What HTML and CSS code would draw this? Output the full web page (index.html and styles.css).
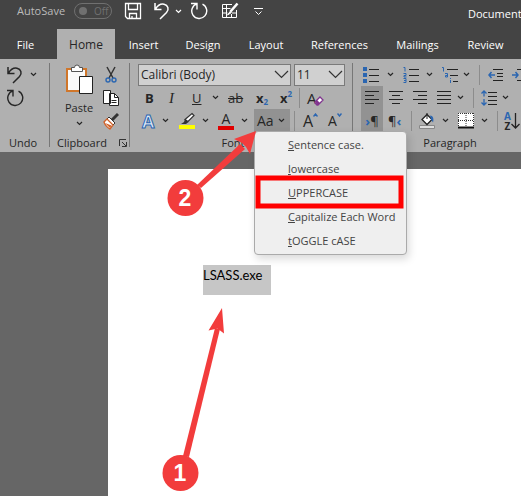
FILE: index.html
```html
<!DOCTYPE html>
<html lang="en">
<head>
    <meta charset="UTF-8">
    <meta name="viewport" content="width=device-width, initial-scale=1.0">
    <title>Document</title>
    <link rel="stylesheet" href="styles.css">
</head>
<body>
    <!-- Shared icon shapes -->
    <svg class="defs" width="0" height="0" aria-hidden="true">
        <symbol id="chev" viewBox="0 0 7 5"><path d="M1 1l2.500 2.500L6 1" fill="none" stroke="currentColor" stroke-width="1.200"/></symbol>
        <symbol id="undo" viewBox="0 0 18 18"><path d="M2 1v6.500h6.500M2.500 7C5 3 8 1.600 11 2.200c4 .8 5.500 5 2.500 8.300L7 17" fill="none" stroke="currentColor" stroke-width="1.500"/></symbol>
        <symbol id="redo" viewBox="0 0 18 18"><path d="M1 1.500h6v6M7 1.800A7.500 7.500 0 1 0 12.500 2.200" fill="none" stroke="currentColor" stroke-width="1.400"/></symbol>
    </svg>

    <header class="titlebar">
        <span class="autosave">AutoSave</span>
        <button class="toggle" aria-label="AutoSave off"><i></i>Off</button>
        <button class="qa" aria-label="Save">
            <svg width="18" height="18" viewBox="0 0 18 18" fill="none" stroke="#fff" stroke-width="1.300"><path d="M1.500 1.500h15v15h-13l-2-2zM4.500 1.500v6h9v-6M5.500 16.500v-5h7v5M8 14v2.500"/></svg>
        </button>
        <button class="qa" aria-label="Undo"><svg width="18" height="18"><use href="#undo"/></svg></button>
        <button class="qa" aria-label="Undo list"><svg width="7" height="5"><use href="#chev"/></svg></button>
        <button class="qa" aria-label="Redo"><svg width="18" height="18"><use href="#redo"/></svg></button>
        <button class="qa" aria-label="Draw table">
            <svg width="18" height="18" viewBox="0 0 18 18" fill="none" stroke="#fff"><path d="M11 2.500H1.500v13h14V8M1.500 6.500h8M1.500 11h5M11 11h4.500M5.500 2.500v13M10.500 12v3.500"/><path d="M16.500 1.500l-7 8" stroke-width="2.500"/><path d="M9.500 9l-3 4 4-2.500" fill="#fff"/></svg>
        </button>
        <button class="qa" aria-label="Customize toolbar">
            <svg width="9" height="9" viewBox="0 0 9 9" fill="none" stroke="#fff"><path d="M0 1.500h9M1.500 4.500l3 3 3-3"/></svg>
        </button>
        <span class="doc-title">Document</span>
    </header>

    <nav class="tabs">
        <a href="#file">File</a>
        <a href="#home" class="active">Home</a>
        <a href="#insert">Insert</a>
        <a href="#design">Design</a>
        <a href="#layout">Layout</a>
        <a href="#references">References</a>
        <a href="#mailings">Mailings</a>
        <a href="#review">Review</a>
    </nav>

    <section class="ribbon">
        <div class="group undo-group">
            <div class="row undo-row">
                <button aria-label="Undo"><svg width="18" height="18"><use href="#undo"/></svg></button>
                <button aria-label="Undo list"><svg width="7" height="5"><use href="#chev"/></svg></button>
            </div>
            <div class="row undo-row">
                <button aria-label="Redo"><svg width="18" height="18"><use href="#redo"/></svg></button>
            </div>
            <div class="group-label">Undo</div>
        </div>

        <div class="group clip-group">
            <div class="clip-body">
                <button class="paste">
                    <svg width="28" height="32" viewBox="0 0 28 32">
                        <path d="M2 6h19v22H2z" fill="#fafafa" stroke="#d0762a" stroke-width="2"/>
                        <path d="M6.500 8.500V4.500h3a2.500 2.500 0 0 1 5 0h3v4z" fill="#fff" stroke="#555"/>
                        <path d="M14.500 13.500h13v17h-13z" fill="#fff" stroke="#222"/>
                    </svg>
                    <span>Paste</span>
                    <svg width="7" height="5"><use href="#chev"/></svg>
                </button>
                <div class="clip-tools">
                    <button aria-label="Cut">
                        <svg width="16" height="18" viewBox="0 0 16 18" fill="none"><path d="M4 1l6 11M12 1L6 12" stroke="#333" stroke-width="1.500"/><circle cx="5" cy="14" r="2" stroke="#2b66b1" stroke-width="1.400"/><circle cx="11" cy="14" r="2" stroke="#2b66b1" stroke-width="1.400"/></svg>
                    </button>
                    <button aria-label="Copy">
                        <svg width="16" height="18" viewBox="0 0 16 18" fill="#fff" stroke="#222"><path d="M.5 1.500h7v13h-7zM6.500 4.500h5l4 4v8h-9z"/><path d="M11.500 4.500v4h4M8.500 11.500h5M8.500 13.500h5" fill="none"/></svg>
                    </button>
                    <button aria-label="Format painter">
                        <svg width="16" height="18" viewBox="0 0 16 18"><path d="M15 2l-6 6" stroke="#333" stroke-width="3"/><path d="M6 5l6 6-2 2-6-6z" fill="#fff" stroke="#333"/><path d="M4 7l6 6-3 4c-2-.5-5-4-6-7z" fill="#fff" stroke="#d0622a" stroke-width="1.300"/><path d="M2 11l5 5 1.500-2.500z" fill="#d0622a"/></svg>
                    </button>
                </div>
            </div>
            <div class="group-label">Clipboard
                <button aria-label="Clipboard options"><svg width="8" height="8" viewBox="0 0 8 8" fill="none" stroke="#333"><path d="M.5 7V.5H7M3 3l4 4M7.500 3v4.500H3"/></svg></button>
            </div>
        </div>

        <div class="group font-group">
            <div class="row combos">
                <span class="combo">
                    <select aria-label="Font"><option>Calibri (Body)</option></select>
                    <svg width="15" height="9" viewBox="0 0 15 9"><path d="M1 1l6.500 6.500L14 1" fill="none" stroke="#333" stroke-width="1.200"/></svg>
                </span>
                <span class="combo">
                    <select aria-label="Font size"><option>11</option></select>
                    <svg width="15" height="9" viewBox="0 0 15 9"><path d="M1 1l6.500 6.500L14 1" fill="none" stroke="#333" stroke-width="1.200"/></svg>
                </span>
            </div>
            <div class="row font-row-style">
                <button class="bold">B</button>
                <button class="italic">I</button>
                <button class="underline">U</button>
                <button aria-label="Underline styles"><svg width="7" height="5"><use href="#chev"/></svg></button>
                <button class="strike">ab</button>
                <button class="script">x<sub>2</sub></button>
                <button class="script">x<sup>2</sup></button>
                <span class="sep"></span>
                <button class="clear" aria-label="Clear formatting">A<svg width="10" height="10" viewBox="0 0 10 10"><path d="M1 6l5-5 3 3-5 5H3L1 7z" fill="#fff" stroke="#81358f" stroke-width="1.300"/><path d="M1 6l2-2 3 3-2 2H3z" fill="#81358f"/></svg></button>
            </div>
            <div class="row font-row-color">
                <button class="effects">A</button>
                <button aria-label="Text effects"><svg width="7" height="5"><use href="#chev"/></svg></button>
                <button aria-label="Highlight">
                    <svg width="16" height="18" viewBox="0 0 16 18"><path d="M0 13h16v4H0z" fill="#ff0"/><path d="M13 1.500l2 2-6 6-3-2z" fill="#fff" stroke="#333" stroke-width="1.200"/><path d="M6 7l3.500 3L7 12H2l3-2z" fill="#333"/></svg>
                </button>
                <button aria-label="Highlight colors"><svg width="7" height="5"><use href="#chev"/></svg></button>
                <button class="color">A</button>
                <button aria-label="Font colors"><svg width="7" height="5"><use href="#chev"/></svg></button>
                <div class="case">
                    <button class="case-button">Aa <svg width="7" height="5"><use href="#chev"/></svg></button>
                    <div class="menu">
                        <button><u>S</u>entence case.</button>
                        <button><u>l</u>owercase</button>
                        <button><u>U</u>PPERCASE</button>
                        <button><u>C</u>apitalize Each Word</button>
                        <button><u>t</u>OGGLE cASE</button>
                    </div>
                </div>
                <span class="sep"></span>
                <button class="grow" aria-label="Grow font">A<svg width="5" height="4" viewBox="0 0 5 4"><path d="M.5 3.500l2-2.500 2 2.500" fill="none" stroke="#2b66b1" stroke-width="1.400"/></svg></button>
                <button class="shrink" aria-label="Shrink font">A<svg width="5" height="4" viewBox="0 0 5 4"><path d="M.5 .5l2 2.500 2-2.500" fill="none" stroke="#2b66b1" stroke-width="1.400"/></svg></button>
            </div>
            <div class="group-label">Font</div>
        </div>

        <div class="group para-group">
            <div class="row para-row-lists">
                <button aria-label="Bullets">
                    <svg width="16" height="18" viewBox="0 0 16 18"><path d="M0 1h4v4H0zM0 7h4v4H0zM0 13h4v4H0z" fill="#2b66b1"/><path d="M6 3.500h10M6 9.500h10M6 15.500h10" stroke="#222"/></svg>
                </button>
                <button aria-label="Bullet styles"><svg width="7" height="5"><use href="#chev"/></svg></button>
                <button aria-label="Numbering">
                    <svg width="16" height="18" viewBox="0 0 16 18"><g fill="none" stroke="#2b66b1"><path d="M.5 1.500h1.500v4M.5 7.500h2.500v2h-2v1.500h2.500M.5 12.500h2.500v4H.5M1 14.500h2"/></g><path d="M6 3.500h10M6 9.500h10M6 15.500h10" stroke="#222"/></svg>
                </button>
                <button aria-label="Number styles"><svg width="7" height="5"><use href="#chev"/></svg></button>
                <button aria-label="Multilevel list">
                    <svg width="16" height="18" viewBox="0 0 16 18"><g fill="none" stroke="#2b66b1"><path d="M0 1.500h1.500v4M3 7.500h2.500v3.500H3.500V9.500h2M8.500 12v1M8.500 14v3"/></g><path d="M5 3.500h11M8 9.500h8M11 15.500h5" stroke="#222"/></svg>
                </button>
                <button aria-label="List styles"><svg width="7" height="5"><use href="#chev"/></svg></button>
                <span class="sep"></span>
                <button aria-label="Decrease indent">
                    <svg width="16" height="14" viewBox="0 0 16 14" fill="none"><path d="M5 1.500h10M9 5.500h6M9 8.500h6M5 12.500h10" stroke="#222"/><path d="M7 7H1M3.500 4L1 7l2.500 3" stroke="#2b66b1" stroke-width="1.500"/></svg>
                </button>
                <button aria-label="Increase indent">
                    <svg width="16" height="14" viewBox="0 0 16 14" fill="none"><path d="M5 1.500h10M9 5.500h6M9 8.500h6M5 12.500h10" stroke="#222"/><path d="M0 7h6M3.500 4L6 7l-2.500 3" stroke="#2b66b1" stroke-width="1.500"/></svg>
                </button>
            </div>
            <div class="row para-row-align">
                <button class="pressed" aria-label="Align left"><svg width="14" height="14" viewBox="0 0 14 14" stroke="#222"><path d="M0 .5h14M0 4.500h9M0 8.500h14M0 12.500h9"/></svg></button>
                <button aria-label="Center"><svg width="14" height="14" viewBox="0 0 14 14" stroke="#222"><path d="M0 .5h14M3 4.500h8M0 8.500h14M3 12.500h8"/></svg></button>
                <button aria-label="Align right"><svg width="14" height="14" viewBox="0 0 14 14" stroke="#222"><path d="M0 .5h14M5 4.500h9M0 8.500h14M5 12.500h9"/></svg></button>
                <button aria-label="Justify"><svg width="14" height="14" viewBox="0 0 14 14" stroke="#222"><path d="M0 .5h14M0 4.500h14M0 8.500h14M0 12.500h14"/></svg></button>
                <button aria-label="Justify options"><svg width="7" height="5"><use href="#chev"/></svg></button>
                <span class="sep"></span>
                <button aria-label="Line spacing">
                    <svg width="16" height="16" viewBox="0 0 16 16" fill="none"><path d="M7 2.500h9M7 6.500h9M7 10.500h9M7 14.500h9" stroke="#222"/><path d="M3 1v5.500M.5 3.500L3 1l2.500 2.500M3 9v6M.5 12.500L3 15l2.500-2.500" stroke="#2b66b1" stroke-width="1.300"/></svg>
                </button>
                <button aria-label="Spacing options"><svg width="7" height="5"><use href="#chev"/></svg></button>
            </div>
            <div class="row para-row-shade">
                <button class="pressed mark"><b>›</b>¶</button>
                <button class="mark">¶<b>‹</b></button>
                <span class="sep"></span>
                <button aria-label="Shading">
                    <svg width="16" height="18" viewBox="0 0 16 18"><path d="M.5 13.500h15v3H.5z" fill="#ddd" stroke="#888"/><path d="M8 2.500l5 5-5 5-5-5z" fill="#fff" stroke="#222" stroke-width="1.300"/><path d="M8 1v6" stroke="#222"/><path d="M11 3.500c3 0 4 3 3 7l-2-3z" fill="#2b66b1"/></svg>
                </button>
                <button aria-label="Shading colors"><svg width="7" height="5"><use href="#chev"/></svg></button>
                <button aria-label="Borders">
                    <svg width="16" height="16" viewBox="0 0 16 16"><path d="M0 0h16v15H0z" fill="#fff"/><path d="M.5 0v15M15.500 0v15M0 .5h16M8 0v15M0 7.500h16" stroke="#333" stroke-dasharray="1 1"/><path d="M0 14.500h16" stroke="#111" stroke-width="2"/></svg>
                </button>
                <button aria-label="Border styles"><svg width="7" height="5"><use href="#chev"/></svg></button>
                <span class="sep"></span>
                <button class="sort">
                    <span><b>A</b><b>Z</b></span>
                    <svg width="9" height="18" viewBox="0 0 9 18"><path d="M4.500 1v15M.5 12l4 4 4-4" fill="none" stroke="#222" stroke-width="1.300"/></svg>
                </button>
            </div>
            <div class="group-label">Paragraph</div>
        </div>
    </section>

    <main class="workspace">
        <article class="page">
            <p><span class="selected">LSASS.exe</span></p>
        </article>
    </main>

    <!-- Numbered steps drawn over the window -->
    <svg class="steps" width="521" height="496" viewBox="0 0 521 496">
        <g fill="#f23c3c">
            <path d="M197 185l43-41 5 5-44 39z"/>
            <path d="M256 131l-22 8 8 4 4 4 4 7z"/>
            <path d="M183 456l32-128 5 1-31 128z"/>
            <path d="M222 308l-13.500 22.500 9-2 6.500 5z"/>
            <circle cx="185.500" cy="198" r="18"/>
            <circle cx="180.500" cy="473" r="18"/>
        </g>
        <rect x="258" y="178" width="143" height="28" fill="none" stroke="#f00" stroke-width="5"/>
        <g class="step-number">
            <text x="185" y="206">2</text>
            <text x="180" y="481">1</text>
        </g>
    </svg>
</body>
</html>
```

FILE: styles.css
```css
* {
    box-sizing: border-box;
}

body {
    margin: 0;
    min-height: 100vh;
    display: flex;
    flex-direction: column;
    position: relative;
    overflow-x: hidden;
    background-color: #666;
    color: #262626;
    font-family: "Open Sans", "Noto Sans", sans-serif;
    font-size: 11px;
    line-height: 16px;
}

button {
    display: flex;
    align-items: center;
    margin: 0;
    padding: 0;
    border: 0;
    background: none;
    color: inherit;
    font: inherit;
}

svg {
    display: block;
    flex: none;
}

.defs {
    position: absolute;
}

/* Title bar */
.titlebar {
    display: grid;
    grid-template-columns: 57px 50px 29px 22px 15px 31px 33px 214px 1fr;
    align-items: center;
    height: 29px;
    padding: 0 0 10px 17px;
    background-color: #444;
    color: #fff;
    white-space: nowrap;
}

.autosave {
    color: #bbb;
}

.toggle {
    width: 38px;
    height: 16px;
    gap: 7px;
    padding-left: 4px;
    border: 1px solid #707070;
    border-radius: 8px;
    color: #707070;
    font-size: 10px;
}

.toggle i {
    width: 8px;
    height: 8px;
    border-radius: 50%;
    background-color: #707070;
}

.doc-title {
    padding-top: 6px;
}

/* Tabs */
.tabs {
    display: grid;
    grid-template-columns: 57px 58px 57px 62px 64px 83px 73px 63px;
    height: 30px;
    background-color: #444;
    overflow: hidden;
}

.tabs a {
    color: #fff;
    line-height: 31px;
    text-align: center;
    text-decoration: none;
}

.tabs a:first-child {
    padding-right: 6px;
}

.tabs .active {
    background-color: #b0b0b0;
    color: #262626;
    font-size: 12px;
}

/* Ribbon */
.ribbon {
    display: flex;
    height: 93px;
    padding-top: 4px;
    background-color: #b0b0b0;
}

.group {
    flex: none;
    border-right: 1px solid #777;
    height: 84px;
}

.row {
    display: grid;
    align-items: center;
    justify-items: start;
    height: 23px;
}

.group-label {
    display: flex;
    align-items: center;
    justify-content: center;
    height: 22px;
}

.sep {
    width: 1px;
    height: 20px;
    background-color: #8c8c8c;
}

.undo-group {
    width: 50px;
    padding-right: 3px;
}

.undo-row {
    grid-template-columns: 24px 16px;
    padding-left: 6px;
}

.undo-group .group-label {
    margin-top: 23px;
}

.clip-group {
    width: 80px;
}

.clip-body {
    display: flex;
    justify-content: space-between;
    height: 69px;
    padding: 0 10px 0 15px;
}

.paste {
    flex-direction: column;
    align-items: center;
}

.paste span {
    margin: 5px 0;
}

.clip-tools {
    display: grid;
    align-items: center;
}

.clip-group .group-label {
    justify-content: space-between;
    padding: 0 2px 0 7px;
}

.font-group {
    width: 223px;
    padding-left: 8px;
}

.combos {
    grid-template-columns: 153px 51px;
    column-gap: 3px;
}

.combo {
    display: grid;
    align-items: center;
    width: 100%;
}

.combo select,
.combo svg {
    grid-area: 1 / 1;
}

.combo select {
    appearance: none;
    width: 100%;
    height: 22px;
    margin: 0;
    padding: 0 2px;
    border: 1px solid #7a7a7a;
    border-radius: 0;
    background-color: #d0d0d0;
    color: #262626;
    font-family: inherit;
    font-size: 12px;
}

.combo svg {
    justify-self: end;
    margin-right: 2px;
    pointer-events: none;
}

.font-row-style {
    grid-template-columns: 24px 23px 20px 16px 28px 24px 19px 8px 20px;
    padding-left: 7px;
    font-size: 13px;
}

.bold {
    font-weight: bold;
}

.italic {
    font-family: "Liberation Serif", serif;
    font-size: 15px;
    font-style: italic;
}

.underline {
    text-decoration: underline;
}

.strike {
    text-decoration: line-through;
}

.script {
    font-weight: bold;
}

.script sub,
.script sup {
    color: #2b66b1;
    font-size: 8px;
    line-height: 8px;
}

.script sub {
    align-self: flex-end;
}

.script sup {
    align-self: flex-start;
}

.clear {
    align-items: flex-end;
    font-size: 15px;
}

.clear svg {
    margin-left: -3px;
}

.font-row-color {
    grid-template-columns: 20px 17px 23px 16px 23px 13px 40px 9px 25px 16px;
    padding-left: 4px;
}

.effects {
    color: #dfe9f5;
    font-size: 18px;
    font-weight: bold;
    -webkit-text-stroke: 1px #2b66b1;
}

.color {
    width: 16px;
    height: 18px;
    justify-content: center;
    border-bottom: 4px solid #e00000;
    font-size: 14px;
}

.case {
    position: relative;
}

.case-button {
    width: 36px;
    height: 23px;
    gap: 4px;
    padding-left: 3px;
    background-color: #929292;
    font-size: 14px;
}

.menu {
    position: absolute;
    z-index: 2;
    top: 22px;
    left: 0;
    width: 153px;
    padding: 1px 0;
    border: 1px solid #aaa;
    border-radius: 4px;
    background-color: #efefef;
    box-shadow: 2px 4px 8px rgba(0, 0, 0, 0.15);
}

.menu button {
    width: 100%;
    height: 24px;
    padding-left: 33px;
    color: #444;
    white-space: nowrap;
}

.grow,
.shrink {
    align-items: flex-start;
    font-size: 16px;
}

.shrink {
    font-size: 14px;
}

.font-group .group-label {
    padding-right: 24px;
}

.para-group {
    flex: 1 1 0;
    min-width: 0;
    padding-left: 8px;
    border-right: 0;
}

.para-row-lists {
    grid-template-columns: 24px 16px 23px 16px 21px 16px 9px 24px 16px;
    padding-left: 2px;
}

.para-row-align {
    grid-template-columns: 28px 24px 24px 20px 16px 8px 21px 10px;
}

.para-row-shade {
    grid-template-columns: 27px 23px 8px 23px 16px 23px 16px 7px 20px;
}

.pressed {
    width: 22px;
    height: 23px;
    justify-content: center;
    background-color: #929292;
}

.mark {
    font-size: 13px;
}

.mark b {
    color: #2b66b1;
}

.sort {
    font-size: 10px;
    line-height: 10px;
}

.sort b {
    display: block;
}

.sort b:first-child {
    color: #2b66b1;
}

.para-group .group-label {
    width: 178px;
}

/* Document */
.workspace {
    display: flex;
    flex: 1;
    padding: 17px 0 0 108px;
}

.page {
    flex: 1;
    padding: 96px 95px;
    background-color: #fff;
    color: #000;
    font-family: Lato, Carlito, sans-serif;
    font-size: 13px;
    line-height: 20px;
}

.page p {
    margin: 0;
}

.selected {
    display: inline-block;
    padding: 0 9px 10px 0;
    background-color: #c6c6c6;
}

/* Callouts */
.steps {
    position: absolute;
    z-index: 3;
    top: 0;
    left: 0;
    pointer-events: none;
}

.step-number {
    fill: #fff;
    font-family: "Liberation Sans", Arial, sans-serif;
    font-size: 23px;
    font-weight: bold;
    text-anchor: middle;
}
```
